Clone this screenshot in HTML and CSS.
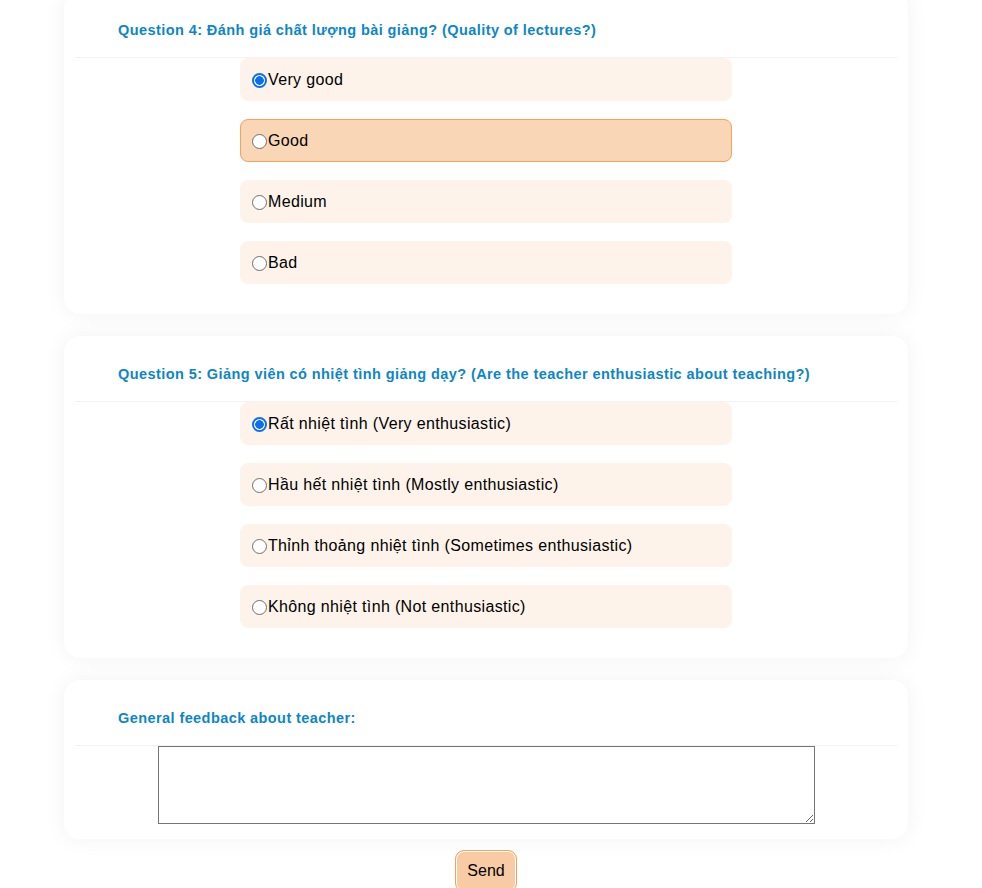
FILE: index.html
```html
<!DOCTYPE html>
<html lang="vi">
<head>
<meta charset="utf-8">
<title>Feedback</title>
<link rel="stylesheet" href="styles.css">
</head>
<body>
<form class="survey">
  <section class="card">
    <div class="card-head">Question 4: Đánh giá chất lượng bài giảng? (Quality of lectures?)</div>
    <div class="options">
      <label class="option"><input type="radio" name="q4" checked>Very good</label>
      <label class="option option-active"><input type="radio" name="q4">Good</label>
      <label class="option"><input type="radio" name="q4">Medium</label>
      <label class="option"><input type="radio" name="q4">Bad</label>
    </div>
  </section>
  <section class="card">
    <div class="card-head">Question 5: Giảng viên có nhiệt tình giảng dạy? (Are the teacher enthusiastic about teaching?)</div>
    <div class="options">
      <label class="option"><input type="radio" name="q5" checked>Rất nhiệt tình (Very enthusiastic)</label>
      <label class="option"><input type="radio" name="q5">Hầu hết nhiệt tình (Mostly enthusiastic)</label>
      <label class="option"><input type="radio" name="q5">Thỉnh thoảng nhiệt tình (Sometimes enthusiastic)</label>
      <label class="option"><input type="radio" name="q5">Không nhiệt tình (Not enthusiastic)</label>
    </div>
  </section>
  <section class="card card-last">
    <div class="card-head">General feedback about teacher:</div>
    <textarea class="feedback"></textarea>
  </section>
  <div class="actions">
    <button type="button" class="send">Send</button>
  </div>
</form>
</body>
</html>
```
FILE: styles.css
```css
html, body {
  margin: 0;
  padding: 0;
  background: #ffffff;
  font-family: "Liberation Sans", Arial, sans-serif;
  overflow: hidden;
}

.survey {
  width: 844px;
  margin: -8px 0 0 64px;
  display: flex;
  flex-direction: column;
  gap: 22px;
}

.card {
  background: #ffffff;
  border-radius: 16px;
  box-shadow: 0 0 22px rgba(0, 0, 0, 0.055);
  padding: 0 11px 30px;
}

.card-last {
  padding-bottom: 15px;
}

.card-head {
  padding: 30px 0 19px 43px;
  font-size: 14.5px;
  line-height: 16px;
  font-weight: bold;
  color: #0c86c9;
  border-bottom: 1px solid #f2f2f2;
  letter-spacing: 0.42px;
}

.options {
  width: 492px;
  margin: 0 auto;
  display: flex;
  flex-direction: column;
  gap: 18px;
}

.option {
  display: flex;
  align-items: center;
  height: 43px;
  box-sizing: border-box;
  padding: 0 7px;
  background: #fdf3ea;
  border: 1px solid #fdf3ea;
  border-radius: 8px;
  font-size: 16px;
  letter-spacing: 0.35px;
  color: #000;
}

.option input {
  appearance: none;
  -webkit-appearance: none;
  box-sizing: border-box;
  width: 15px;
  height: 15px;
  margin: 1px 1px 0 4px;
  border: 1.5px solid #6e6e6e;
  border-radius: 50%;
  background: #fff;
  flex: none;
}

.option input:checked {
  border: 2px solid #0b6ff2;
  background: radial-gradient(circle, #0b6ff2 0, #0b6ff2 4px, #fff 4.6px);
}

.option-active {
  background: #f9d6b6;
  border-color: #f5a35a;
}

.feedback {
  display: block;
  box-sizing: border-box;
  width: 657px;
  height: 78px;
  margin: 0 auto;
  border: 1px solid #767676;
  padding: 2px;
  font-family: "Liberation Mono", monospace;
  resize: both;
}

.actions {
  display: flex;
  justify-content: center;
  margin-top: -11px;
}

.send {
  font-family: "Liberation Sans", Arial, sans-serif;
  font-size: 16px;
  color: #000;
  background: #f8cba4;
  border: 1px solid #f0a460;
  box-shadow: inset 0 0 0 1px #fff;
  border-radius: 9px;
  padding: 10px 10px;
  width: 62px;
  height: 42px;
}
```
